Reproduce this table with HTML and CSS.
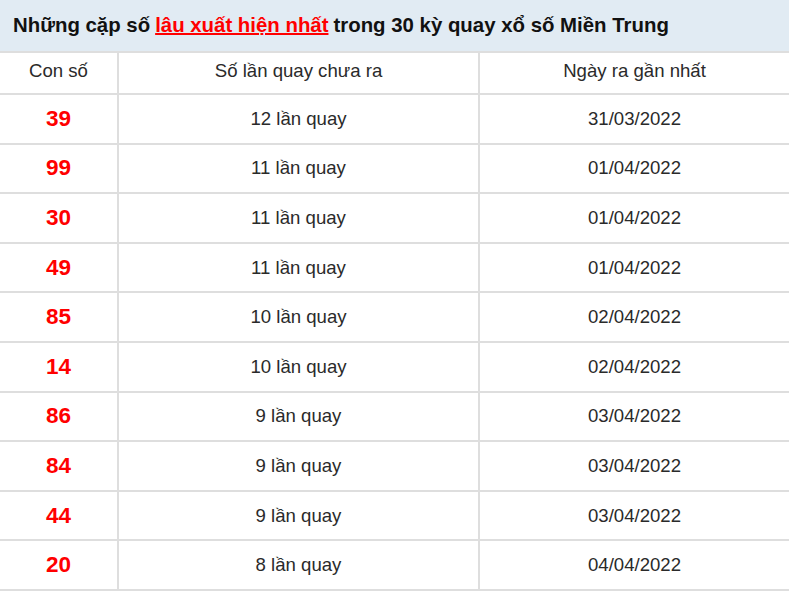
FILE: index.html
```html
<!DOCTYPE html>
<html lang="vi">
<head>
<meta charset="utf-8">
<link rel="stylesheet" href="styles.css">
</head>
<body>
<div class="box">
  <h2 class="title">Những cặp số <a class="hl">lâu xuất hiện nhất</a> trong 30 kỳ quay xổ số Miền Trung</h2>
  <table class="tbl">
    <thead>
      <tr><th class="c1">Con số</th><th class="c2">Số lần quay chưa ra</th><th class="c3">Ngày ra gần nhất</th></tr>
    </thead>
    <tbody>
      <tr><td class="num">39</td><td>12 lần quay</td><td>31/03/2022</td></tr>
      <tr><td class="num">99</td><td>11 lần quay</td><td>01/04/2022</td></tr>
      <tr><td class="num">30</td><td>11 lần quay</td><td>01/04/2022</td></tr>
      <tr><td class="num">49</td><td>11 lần quay</td><td>01/04/2022</td></tr>
      <tr><td class="num">85</td><td>10 lần quay</td><td>02/04/2022</td></tr>
      <tr><td class="num">14</td><td>10 lần quay</td><td>02/04/2022</td></tr>
      <tr><td class="num">86</td><td>9 lần quay</td><td>03/04/2022</td></tr>
      <tr><td class="num">84</td><td>9 lần quay</td><td>03/04/2022</td></tr>
      <tr><td class="num">44</td><td>9 lần quay</td><td>03/04/2022</td></tr>
      <tr><td class="num">20</td><td>8 lần quay</td><td>04/04/2022</td></tr>
    </tbody>
  </table>
</div>
</body>
</html>
```
FILE: styles.css
```css
html, body { margin: 0; padding: 0; background: #fff; }
body { font-family: "Liberation Sans", Arial, sans-serif; color: #333; }
.box { width: 789px; }
.title {
  margin: 0;
  height: 51px;
  box-sizing: border-box;
  padding: 0 13px;
  display: flex;
  align-items: center;
  background: #e1ebf3;
  font-size: 20.4px;
  font-weight: bold;
  color: #111;
  white-space: nowrap;
}
.title .hl { color: #f00; text-decoration: underline; text-decoration-thickness: 2px; margin: 0 5px; }
.tbl {
  width: 789px;
  border-collapse: collapse;
  table-layout: fixed;
  font-size: 18.6px;
}
.tbl th, .tbl td {
  border: 2px solid #dedede;
  text-align: center;
  padding: 0;
  font-weight: normal;
  color: #2a2a2a;
}
.tbl tr > :first-child { border-left: none; }
.tbl tr > :last-child { border-right: none; }
.tbl th { height: 42px; vertical-align: top; padding-top: 7px; box-sizing: border-box; }
.c1 { width: 118px; }
.c2 { width: 361px; }
.tbl td { height: 47.6px; }
.tbl td.num { color: #f00; font-weight: bold; font-size: 22.5px; }
```
